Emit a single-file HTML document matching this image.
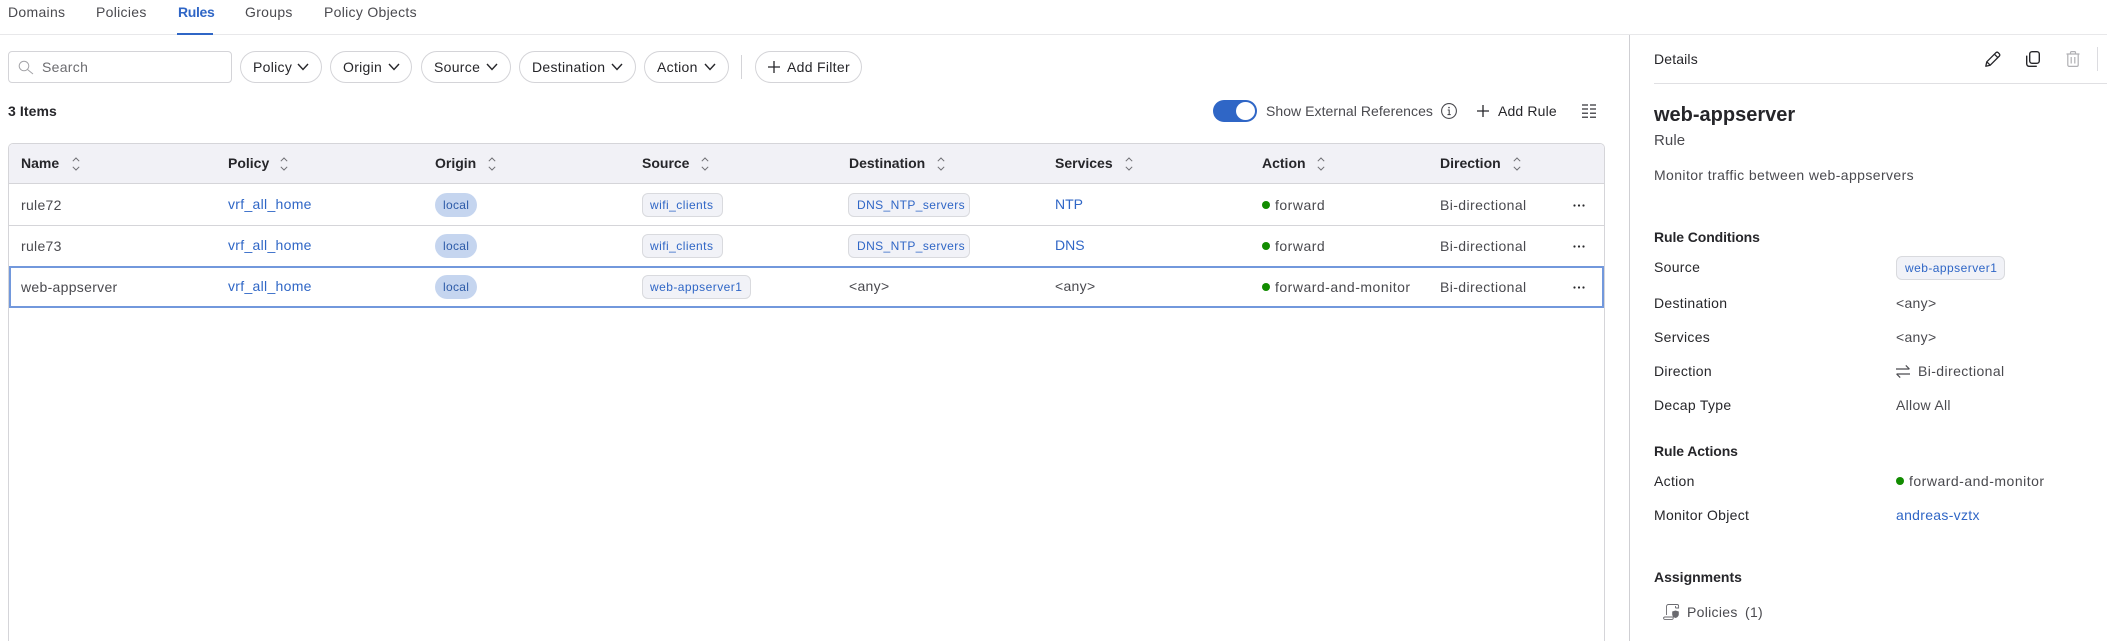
<!DOCTYPE html>
<html lang="en">
<head>
<meta charset="utf-8">
<title>Rules</title>
<style>
html,body{margin:0;padding:0;background:#fff;width:2107px;height:641px;overflow:hidden;}
#page{position:relative;width:2107px;height:641px;overflow:hidden;font-family:"Liberation Sans",sans-serif;font-size:14px;color:#4a4a4f;}
.b{position:absolute;box-sizing:border-box;}
.t{position:absolute;white-space:nowrap;line-height:20px;height:20px;letter-spacing:.3px;}
.h{font-weight:700;color:#26262a;letter-spacing:0;}
.l{color:#2f66c6;}
.d{color:#26262a;}
.pill{position:absolute;box-sizing:border-box;top:51px;height:32px;border:1px solid #d4d4d8;border-radius:16px;background:#fff;}
.chip{position:absolute;box-sizing:border-box;height:24px;background:#f1f2f7;border:1px solid #d9dade;border-radius:6px;}
.ct{font-size:12px;letter-spacing:.4px;color:#2f66c6;}
.loc{position:absolute;box-sizing:border-box;left:435px;width:42px;height:24px;border-radius:12px;background:#c5d5ef;}
.dot{position:absolute;width:8px;height:8px;border-radius:50%;background:#128c00;}
svg{position:absolute;overflow:visible;fill:none;}
</style>
</head>
<body>
<div id="page">
<!-- tabs -->
<span class="t" style="left:8px;top:2px;">Domains</span>
<span class="t" style="left:96px;top:2px;">Policies</span>
<span class="t" style="left:178px;top:2px;color:#2f66c6;font-weight:700;letter-spacing:-.35px;">Rules</span>
<span class="t" style="left:245px;top:2px;">Groups</span>
<span class="t" style="left:324px;top:2px;">Policy Objects</span>
<div class="b" style="left:0;top:34px;width:2107px;height:1px;background:#e8e8ea;"></div>
<div class="b" style="left:177px;top:33px;width:36px;height:2px;background:#2f66c6;"></div>

<!-- filters -->
<div class="b" style="left:8px;top:51px;width:224px;height:32px;border:1px solid #d4d4d8;border-radius:4px;"></div>
<svg style="left:19px;top:61px;" width="14" height="14" viewBox="0 0 14 14"><circle cx="5" cy="5" r="4.8" stroke="#a4a4a8" stroke-width="1"/><path d="M8.500 8.500L14 13" stroke="#a4a4a8" stroke-width="1"/></svg>
<span class="t" style="left:42px;top:57px;color:#6c6c70;">Search</span>

<div class="pill" style="left:240px;width:82px;"></div>
<span class="t d" style="left:253px;top:57px;">Policy</span>
<svg style="left:297px;top:63px;" width="12" height="8" viewBox="0 0 12 8"><path d="M1 1l5 5.500L11 1" stroke="#26262a" stroke-width="1.400"/></svg>

<div class="pill" style="left:330px;width:82px;"></div>
<span class="t d" style="left:343px;top:57px;">Origin</span>
<svg style="left:388px;top:63px;" width="12" height="8" viewBox="0 0 12 8"><path d="M1 1l5 5.500L11 1" stroke="#26262a" stroke-width="1.400"/></svg>

<div class="pill" style="left:421px;width:90px;"></div>
<span class="t d" style="left:434px;top:57px;">Source</span>
<svg style="left:486px;top:63px;" width="12" height="8" viewBox="0 0 12 8"><path d="M1 1l5 5.500L11 1" stroke="#26262a" stroke-width="1.400"/></svg>

<div class="pill" style="left:519px;width:117px;"></div>
<span class="t d" style="left:532px;top:57px;">Destination</span>
<svg style="left:611px;top:63px;" width="12" height="8" viewBox="0 0 12 8"><path d="M1 1l5 5.500L11 1" stroke="#26262a" stroke-width="1.400"/></svg>

<div class="pill" style="left:644px;width:85px;"></div>
<span class="t d" style="left:657px;top:57px;">Action</span>
<svg style="left:704px;top:63px;" width="12" height="8" viewBox="0 0 12 8"><path d="M1 1l5 5.500L11 1" stroke="#26262a" stroke-width="1.400"/></svg>

<div class="b" style="left:741px;top:55px;width:1px;height:24px;background:#d4d4d8;"></div>

<div class="pill" style="left:755px;width:107px;"></div>
<svg style="left:768px;top:61px;" width="12" height="12" viewBox="0 0 12 12"><path d="M6 0v12M0 6h12" stroke="#26262a" stroke-width="1.300"/></svg>
<span class="t d" style="left:787px;top:57px;">Add Filter</span>

<!-- toolbar -->
<span class="t h" style="left:8px;top:101px;letter-spacing:.1px;">3 Items</span>
<div class="b" style="left:1213px;top:100px;width:44px;height:22px;border-radius:11px;background:#2f66c6;"></div>
<div class="b" style="left:1236px;top:102px;width:19px;height:18px;border-radius:50%;background:#fff;"></div>
<span class="t" style="left:1266px;top:101px;letter-spacing:.05px;">Show External References</span>
<svg style="left:1441px;top:103px;" width="16" height="16" viewBox="0 0 16 16"><circle cx="8" cy="8" r="7.400" stroke="#4a4a4f" stroke-width="1.100"/><path d="M6.700 7h1.500v4.500M6.500 11.600h3.200" stroke="#4a4a4f" stroke-width="1.100"/><circle cx="8" cy="4.600" r=".8" fill="#4a4a4f"/></svg>
<svg style="left:1477px;top:105px;" width="12" height="12" viewBox="0 0 12 12"><path d="M6 0v12M0 6h12" stroke="#26262a" stroke-width="1.300"/></svg>
<span class="t d" style="left:1498px;top:101px;letter-spacing:.15px;">Add Rule</span>
<svg style="left:1582px;top:104px;" width="14" height="14" viewBox="0 0 14 14"><path d="M0 1h6M8 1h6M0 5h6M8 5h6M0 9.200h6M8 9.200h6M0 13.200h6M8 13.200h6" stroke="#55555a" stroke-width="1.500"/></svg>

<!-- table -->
<div class="b" style="left:8px;top:143px;width:1597px;height:498px;border:1px solid #d5d5d9;border-bottom:none;border-radius:5px 5px 0 0;"></div>
<div class="b" style="left:9px;top:144px;width:1595px;height:40px;background:#f1f1f6;border-radius:4px 4px 0 0;border-bottom:1px solid #d5d5d9;"></div>
<div class="b" style="left:9px;top:225px;width:1595px;height:1px;background:#d5d5d9;"></div>
<div class="b" style="left:9px;top:266px;width:1595px;height:42px;border:2px solid #7298dc;"></div>

<span class="t h" style="left:21px;top:153px;">Name</span>
<span class="t h" style="left:228px;top:153px;">Policy</span>
<span class="t h" style="left:435px;top:153px;">Origin</span>
<span class="t h" style="left:642px;top:153px;">Source</span>
<span class="t h" style="left:849px;top:153px;">Destination</span>
<span class="t h" style="left:1055px;top:153px;">Services</span>
<span class="t h" style="left:1262px;top:153px;">Action</span>
<span class="t h" style="left:1440px;top:153px;">Direction</span>

<svg style="left:72px;top:157px;" width="8" height="14" viewBox="0 0 8 14"><path d="M.8 4.200L4 1l3.200 3.200M.8 9.800L4 13l3.200-3.200" stroke="#6f6f74" stroke-width="1"/></svg>
<svg style="left:280px;top:157px;" width="8" height="14" viewBox="0 0 8 14"><path d="M.8 4.200L4 1l3.200 3.200M.8 9.800L4 13l3.200-3.200" stroke="#6f6f74" stroke-width="1"/></svg>
<svg style="left:488px;top:157px;" width="8" height="14" viewBox="0 0 8 14"><path d="M.8 4.200L4 1l3.200 3.200M.8 9.800L4 13l3.200-3.200" stroke="#6f6f74" stroke-width="1"/></svg>
<svg style="left:701px;top:157px;" width="8" height="14" viewBox="0 0 8 14"><path d="M.8 4.200L4 1l3.200 3.200M.8 9.800L4 13l3.200-3.200" stroke="#6f6f74" stroke-width="1"/></svg>
<svg style="left:937px;top:157px;" width="8" height="14" viewBox="0 0 8 14"><path d="M.8 4.200L4 1l3.200 3.200M.8 9.800L4 13l3.200-3.200" stroke="#6f6f74" stroke-width="1"/></svg>
<svg style="left:1125px;top:157px;" width="8" height="14" viewBox="0 0 8 14"><path d="M.8 4.200L4 1l3.200 3.200M.8 9.800L4 13l3.200-3.200" stroke="#6f6f74" stroke-width="1"/></svg>
<svg style="left:1317px;top:157px;" width="8" height="14" viewBox="0 0 8 14"><path d="M.8 4.200L4 1l3.200 3.200M.8 9.800L4 13l3.200-3.200" stroke="#6f6f74" stroke-width="1"/></svg>
<svg style="left:1513px;top:157px;" width="8" height="14" viewBox="0 0 8 14"><path d="M.8 4.200L4 1l3.200 3.200M.8 9.800L4 13l3.200-3.200" stroke="#6f6f74" stroke-width="1"/></svg>

<!-- row 1 -->
<span class="t" style="left:21px;top:195px;">rule72</span>
<span class="t l" style="left:228px;top:194px;">vrf_all_home</span>
<div class="loc" style="top:193px;"></div><span class="t ct" style="left:443px;top:195px;color:#2d5ba8;letter-spacing:.3px;">local</span>
<div class="chip" style="left:642px;top:193px;width:81px;"></div><span class="t ct" style="left:650px;top:195px;letter-spacing:.45px;">wifi_clients</span>
<div class="chip" style="left:848px;top:193px;width:122px;"></div><span class="t ct" style="left:857px;top:195px;">DNS_NTP_servers</span>
<span class="t l" style="left:1055px;top:194px;letter-spacing:0;">NTP</span>
<div class="dot" style="left:1262px;top:201px;"></div><span class="t" style="left:1275px;top:195px;letter-spacing:.5px;">forward</span>
<span class="t" style="left:1440px;top:195px;letter-spacing:.4px;">Bi-directional</span>
<svg style="left:1573px;top:204px;" width="12" height="3" viewBox="0 0 12 3"><circle cx="1.500" cy="1.500" r="1.100" fill="#26262a"/><circle cx="6" cy="1.500" r="1.100" fill="#26262a"/><circle cx="10.500" cy="1.500" r="1.100" fill="#26262a"/></svg>

<!-- row 2 -->
<span class="t" style="left:21px;top:236px;">rule73</span>
<span class="t l" style="left:228px;top:235px;">vrf_all_home</span>
<div class="loc" style="top:234px;"></div><span class="t ct" style="left:443px;top:236px;color:#2d5ba8;letter-spacing:.3px;">local</span>
<div class="chip" style="left:642px;top:234px;width:81px;"></div><span class="t ct" style="left:650px;top:236px;letter-spacing:.45px;">wifi_clients</span>
<div class="chip" style="left:848px;top:234px;width:122px;"></div><span class="t ct" style="left:857px;top:236px;">DNS_NTP_servers</span>
<span class="t l" style="left:1055px;top:235px;letter-spacing:0;">DNS</span>
<div class="dot" style="left:1262px;top:242px;"></div><span class="t" style="left:1275px;top:236px;letter-spacing:.5px;">forward</span>
<span class="t" style="left:1440px;top:236px;letter-spacing:.4px;">Bi-directional</span>
<svg style="left:1573px;top:245px;" width="12" height="3" viewBox="0 0 12 3"><circle cx="1.500" cy="1.500" r="1.100" fill="#26262a"/><circle cx="6" cy="1.500" r="1.100" fill="#26262a"/><circle cx="10.500" cy="1.500" r="1.100" fill="#26262a"/></svg>

<!-- row 3 -->
<span class="t" style="left:21px;top:277px;">web-appserver</span>
<span class="t l" style="left:228px;top:276px;">vrf_all_home</span>
<div class="loc" style="top:275px;"></div><span class="t ct" style="left:443px;top:277px;color:#2d5ba8;letter-spacing:.3px;">local</span>
<div class="chip" style="left:642px;top:275px;width:109px;"></div><span class="t ct" style="left:650px;top:277px;letter-spacing:.45px;">web-appserver1</span>
<span class="t" style="left:849px;top:276px;">&lt;any&gt;</span>
<span class="t" style="left:1055px;top:276px;">&lt;any&gt;</span>
<div class="dot" style="left:1262px;top:283px;"></div><span class="t" style="left:1275px;top:277px;letter-spacing:.5px;">forward-and-monitor</span>
<span class="t" style="left:1440px;top:277px;letter-spacing:.4px;">Bi-directional</span>
<svg style="left:1573px;top:286px;" width="12" height="3" viewBox="0 0 12 3"><circle cx="1.500" cy="1.500" r="1.100" fill="#26262a"/><circle cx="6" cy="1.500" r="1.100" fill="#26262a"/><circle cx="10.500" cy="1.500" r="1.100" fill="#26262a"/></svg>

<!-- details panel -->
<div class="b" style="left:1629px;top:35px;width:1px;height:606px;background:#cfcfd3;"></div>
<span class="t d" style="left:1654px;top:49px;letter-spacing:.15px;">Details</span>
<svg style="left:1985px;top:51px;" width="16" height="16" viewBox="0 0 16 16"><path d="M.8 15.200l1-4.400L10.900 1.700a1.600 1.600 0 0 1 2.300 0l1.100 1.100a1.600 1.600 0 0 1 0 2.300L5.200 14.200zM9.400 3.200l3.400 3.400M1.800 10.800l3.400 3.400" stroke="#26262a" stroke-width="1.300" stroke-linejoin="round"/></svg>
<svg style="left:2026px;top:51px;" width="14" height="16" viewBox="0 0 14 16"><rect x="3.700" y=".7" width="9.600" height="11.600" rx="2.400" stroke="#26262a" stroke-width="1.400"/><path d="M.7 4.600v8.200a2.500 2.500 0 0 0 2.500 2.500h7.600" stroke="#26262a" stroke-width="1.400"/></svg>
<svg style="left:2066px;top:51px;" width="14" height="16" viewBox="0 0 14 16"><path d="M.5 3h13M4.500 3V1.600a1 1 0 0 1 1-1h3a1 1 0 0 1 1 1V3M1.800 3v11a1.400 1.400 0 0 0 1.400 1.400h7.600a1.400 1.400 0 0 0 1.400-1.400V3M5.200 6v6.500M8.800 6v6.500" stroke="#b0b0b4" stroke-width="1.200"/></svg>
<div class="b" style="left:2097px;top:47px;width:1px;height:24px;background:#dcdce0;"></div>
<div class="b" style="left:1654px;top:83px;width:453px;height:1px;background:#e0e0e3;"></div>

<span class="t" style="left:1654px;top:105px;font-size:20px;font-weight:700;color:#26262a;letter-spacing:0;">web-appserver</span>
<span class="t" style="left:1654px;top:131px;font-size:15px;letter-spacing:.1px;">Rule</span>
<span class="t" style="left:1654px;top:165px;letter-spacing:.4px;">Monitor traffic between web-appservers</span>

<span class="t h" style="left:1654px;top:227px;letter-spacing:-.1px;">Rule Conditions</span>
<span class="t d" style="left:1654px;top:257px;">Source</span>
<div class="chip" style="left:1896px;top:256px;width:109px;"></div><span class="t ct" style="left:1905px;top:258px;letter-spacing:.45px;">web-appserver1</span>
<span class="t d" style="left:1654px;top:293px;">Destination</span>
<span class="t" style="left:1896px;top:293px;">&lt;any&gt;</span>
<span class="t d" style="left:1654px;top:327px;">Services</span>
<span class="t" style="left:1896px;top:327px;">&lt;any&gt;</span>
<span class="t d" style="left:1654px;top:361px;">Direction</span>
<svg style="left:1896px;top:365px;" width="14" height="13" viewBox="0 0 14 13"><path d="M0 4h13.400M9.800.4L13.400 4M14 9H.6M4.200 12.600L.6 9" stroke="#4a4a4f" stroke-width="1.200"/></svg>
<span class="t" style="left:1918px;top:361px;letter-spacing:.4px;">Bi-directional</span>
<span class="t d" style="left:1654px;top:395px;">Decap Type</span>
<span class="t" style="left:1896px;top:395px;">Allow All</span>

<span class="t h" style="left:1654px;top:441px;letter-spacing:-.1px;">Rule Actions</span>
<span class="t d" style="left:1654px;top:471px;">Action</span>
<div class="dot" style="left:1896px;top:477px;"></div>
<span class="t" style="left:1909px;top:471px;letter-spacing:.5px;">forward-and-monitor</span>
<span class="t d" style="left:1654px;top:505px;">Monitor Object</span>
<span class="t l" style="left:1896px;top:505px;">andreas-vztx</span>

<span class="t h" style="left:1654px;top:567px;letter-spacing:0;">Assignments</span>
<svg style="left:1663px;top:604px;" width="17" height="16" viewBox="0 0 17 16"><path d="M3.500 11V2.500A2 2 0 0 1 5.500.5h8.500M14 .5a1.600 1.600 0 0 1 1.600 1.600V4H12.500M12.500 4V2M.6 13.200v1a1.200 1.200 0 0 0 1.200 1.200h7.200a1.200 1.200 0 0 0 1.200-1.200v-1.200H1.800a1.200 1.200 0 0 0-1.200 1.200z" stroke="#6a6a6f" stroke-width=".9"/><path d="M12.500 6.500l3.300 1v2.700c0 2-1.500 3.200-3.300 3.800-1.800-.6-3.300-1.800-3.300-3.800V7.500z" fill="#6a6a6f"/></svg>
<span class="t" style="left:1687px;top:602px;">Policies</span>
<span class="t" style="left:1745px;top:602px;">(1)</span>
</div>
</body>
</html>
